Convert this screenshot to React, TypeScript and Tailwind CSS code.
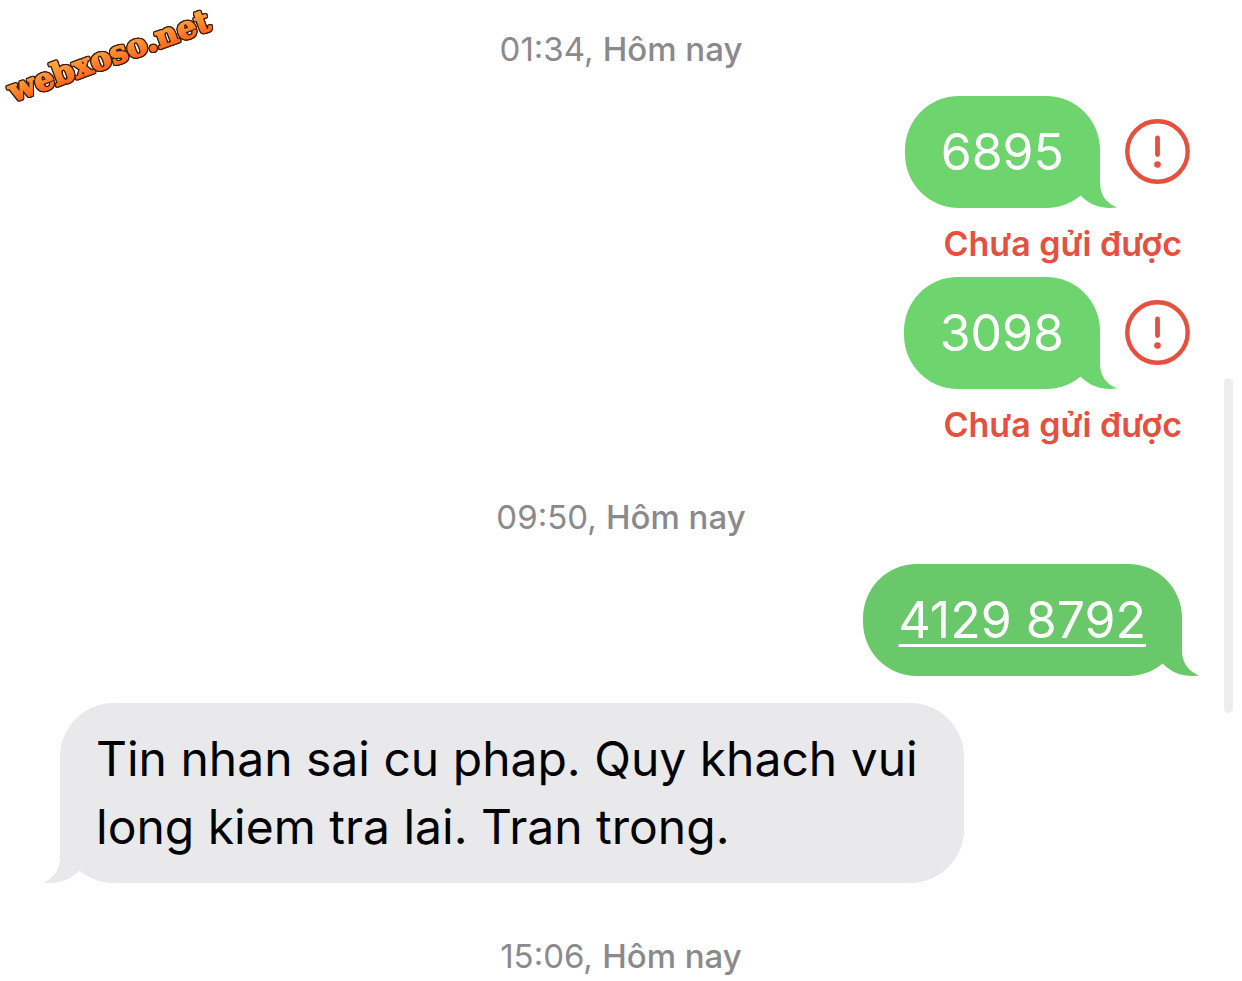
import { ReactNode } from "react";

interface BubbleProps {
  side: "sent" | "received";
  className: string;
  children: ReactNode;
}

function Bubble({ side, className, children }: BubbleProps) {
  return (
    <div
      className={`relative w-fit max-w-[904px] rounded-[54px] px-9 py-[22px] leading-[68px] ${className}`}
    >
      {children}
      <svg
        viewBox="0 0 53 56"
        className={`absolute bottom-0 h-[56px] w-[53px] ${
          side === "sent" ? "-right-[17px]" : "-left-[17px] -scale-x-100"
        }`}
        aria-hidden="true"
      >
        <path
          fill="var(--tail)"
          d="M36 0V30C36 43 42 51 53 55.4C41 57 28 55 17 44L10 20Z"
        />
      </svg>
    </div>
  );
}

function Timestamp({ time }: { time: string }) {
  return (
    <div className="text-center text-[33px] leading-[48px] text-[#8a8a8e]">
      {time}, <span className="font-medium">Hôm nay</span>
    </div>
  );
}

function FailedMessage({ text }: { text: string }) {
  return (
    <div>
      <div className="-mr-2 flex items-center justify-end gap-[25px]">
        <Bubble
          side="sent"
          className="bg-[#6dd46e] text-[50px] text-white [--tail:#6dd46e]"
        >
          {text}
        </Bubble>
        <button type="button" aria-label="Gửi lại" className="cursor-pointer">
          <svg viewBox="0 0 65 66" className="h-[66px] w-[65px]" fill="none">
            <circle cx="32.5" cy="32.5" r="30.2" stroke="#e5503f" strokeWidth="4.4" />
            <path
              d="M32.5 19V35.5"
              stroke="#e5503f"
              strokeWidth="4.8"
              strokeLinecap="round"
            />
            <circle cx="32.5" cy="45.5" r="3.3" fill="#e5503f" />
          </svg>
        </button>
      </div>
      <div className="mt-4 mb-[13px] text-right text-[34px] leading-10 font-semibold text-[#e5503f]">
        Chưa gửi được
      </div>
    </div>
  );
}

function Watermark() {
  return (
    <svg
      viewBox="0 0 230 115"
      className="absolute top-0 left-0 h-[115px] w-[230px] overflow-visible [filter:drop-shadow(1px_0_0_#3b1c08)_drop-shadow(-1px_0_0_#3b1c08)_drop-shadow(0_1px_0_#3b1c08)_drop-shadow(0_-1px_0_#3b1c08)]"
    >
      <defs>
        <linearGradient id="orange" x1="0" y1="0" x2="0" y2="1">
          <stop offset="0.25" stopColor="#ffa53c" />
          <stop offset="0.85" stopColor="#ff641c" />
        </linearGradient>
      </defs>
      <text
        x="0"
        y="0"
        transform="translate(13 102) rotate(-20)"
        fontFamily="'DejaVu Serif', serif"
        fontWeight="bold"
        fontSize="31"
        fill="url(#orange)"
        stroke="url(#orange)"
        strokeWidth="1.5"
        strokeLinejoin="round"
      >
        webxoso.net
      </text>
    </svg>
  );
}

export default function App() {
  return (
    <div className="relative min-h-screen bg-white font-[Inter,sans-serif]">
      <main className="px-[60px] pt-[25px]">
        <Timestamp time="01:34" />
        <div className="mt-[23px]">
          <FailedMessage text="6895" />
          <FailedMessage text="3098" />
        </div>
        <div className="mt-12">
          <Timestamp time="09:50" />
        </div>
        <div className="mt-[23px] flex justify-end">
          <Bubble
            side="sent"
            className="bg-[#69c96a] text-[50px] text-white [--tail:#69c96a]"
          >
            <a
              href="tel:41298792"
              className="underline decoration-[3px] underline-offset-[6px]"
            >
              4129 8792
            </a>
          </Bubble>
        </div>
        <div className="mt-[27px]">
          <Bubble
            side="received"
            className="bg-[#e9e9eb] text-5xl text-black [--tail:#e9e9eb]"
          >
            Tin nhan sai cu phap. Quy khach vui long kiem tra lai. Tran trong.
          </Bubble>
        </div>
        <div className="mt-[49px]">
          <Timestamp time="15:06" />
        </div>
      </main>

      <Watermark />
      {/* Scroll indicator */}
      <div className="absolute top-[378px] right-[9px] h-[335px] w-[9px] rounded-full bg-[#ededed]" />
    </div>
  );
}
